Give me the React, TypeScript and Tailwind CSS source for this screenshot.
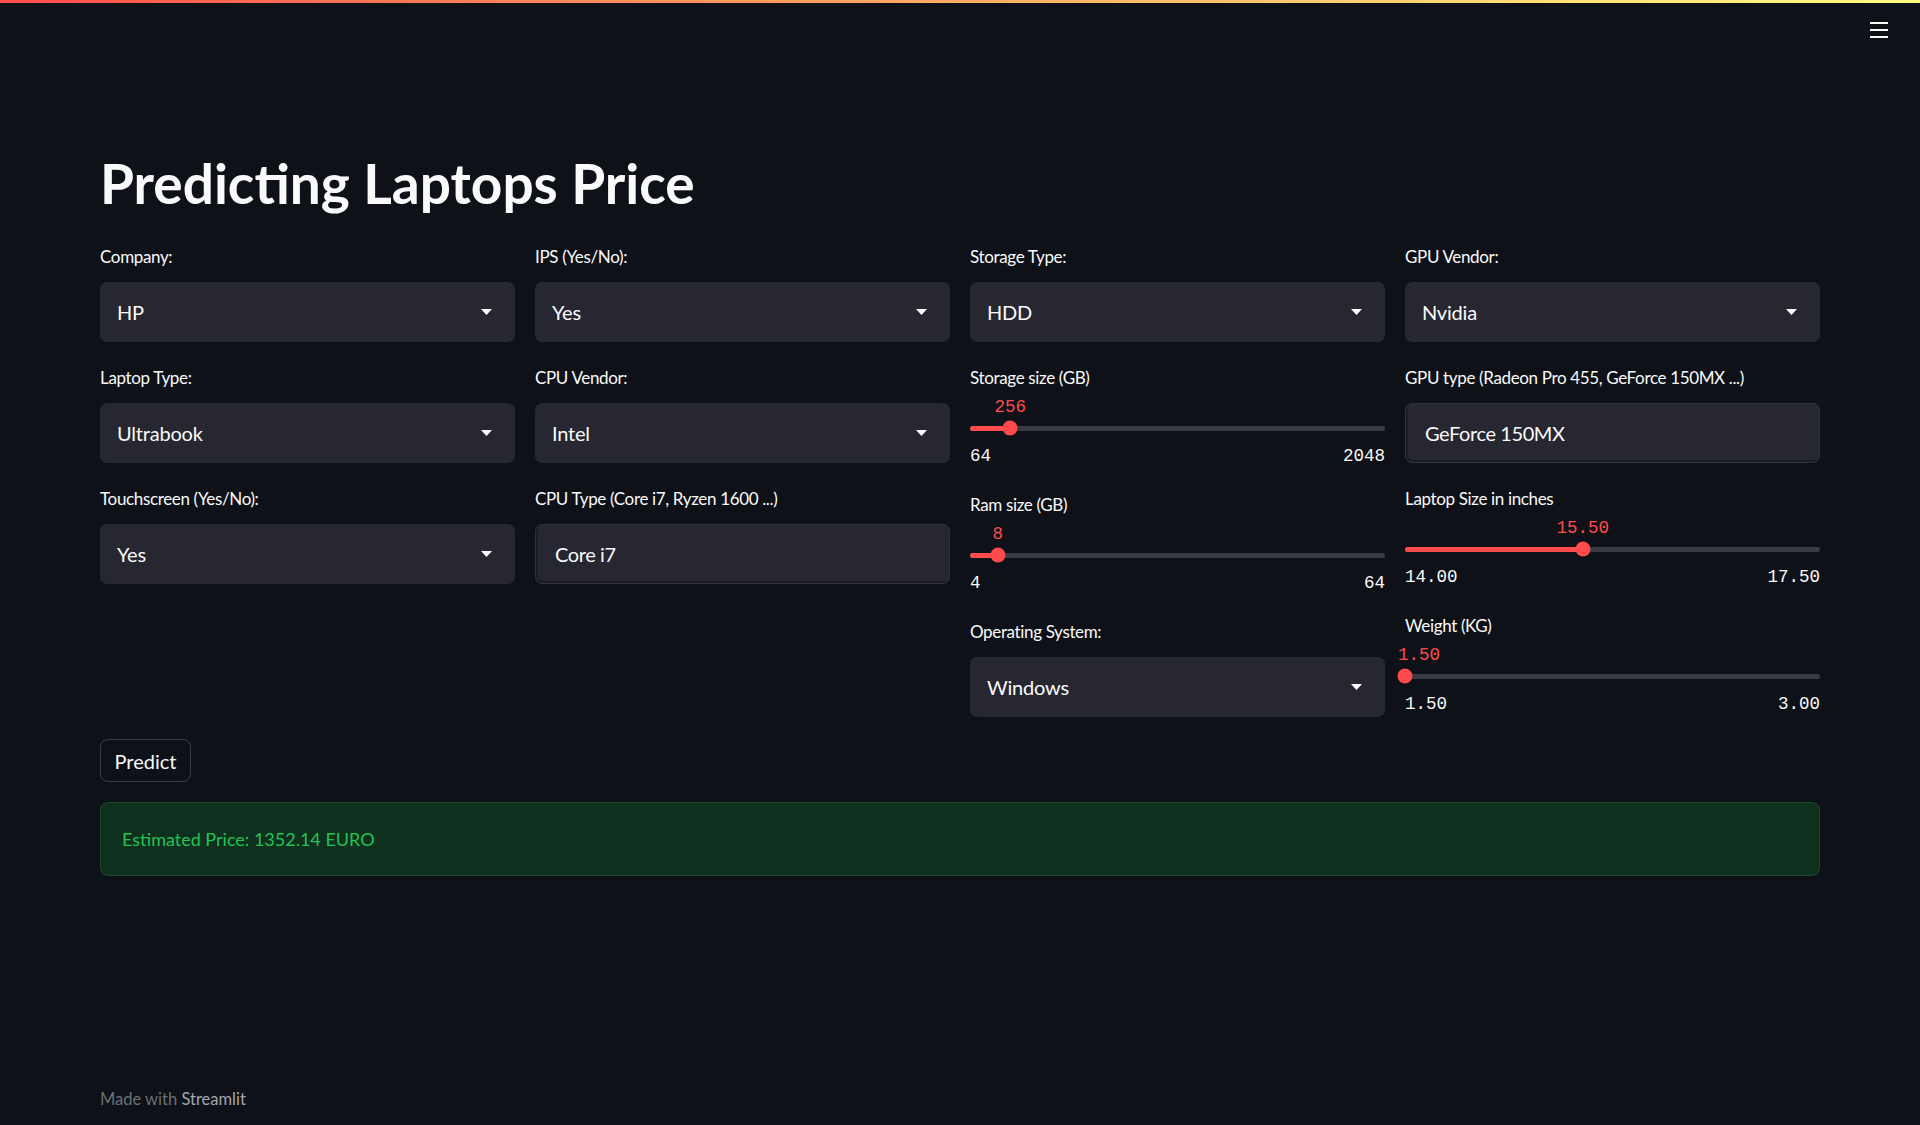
import React from 'react'

const labelCls = "h-[35px] text-[17px] leading-[30px] tracking-[-0.35px] text-[#fafafa]"

function Caret() {
  return (
    <svg width="11" height="6" viewBox="0 0 11 6" className="shrink-0">
      <path d="M0 0 L11 0 L5.5 6 Z" fill="#fafafa" />
    </svg>
  )
}

function SelectBox({ label, value }: { label: string; value: string }) {
  return (
    <div className="flex flex-col">
      <div className={labelCls}>{label}</div>
      <div className="mt-[5px] flex h-[60px] items-center justify-between rounded-[7px] bg-[#262730] pl-[17px] pr-[23px]">
        <span className="text-[20px] tracking-[-0.2px] text-[#fafafa]">{value}</span>
        <Caret />
      </div>
    </div>
  )
}

function TextBox({ label, value }: { label: string; value: string }) {
  return (
    <div className="flex flex-col">
      <div className={labelCls}>{label}</div>
      <div className="mt-[5px] flex h-[60px] items-center rounded-[7px] border border-[#30313a] bg-[#262730] pl-[19px] shadow-[inset_2px_-2px_0_#1c1d24]">
        <span className="text-[20px] tracking-[-0.4px] text-[#fafafa]">{value}</span>
      </div>
    </div>
  )
}

function Slider({ label, min, max, value, digits }: { label: string; min: number; max: number; value: number; digits: number }) {
  const pct = ((value - min) / (max - min)) * 100
  const atMin = value === min
  return (
    <div className="flex flex-col">
      <div className={labelCls}>{label}</div>
      <div className="relative h-[18px]">
        <span
          className={
            atMin
              ? "absolute top-0 -translate-x-[7px] font-['Liberation_Mono',monospace] text-[17.5px] leading-[18px] text-[#ff4b4b]"
              : "absolute top-0 -translate-x-1/2 font-['Liberation_Mono',monospace] text-[17.5px] leading-[18px] text-[#ff4b4b]"
          }
          style={{ left: `${pct}%` }}
        >
          {value.toFixed(digits)}
        </span>
      </div>
      <div className="flex h-[24px] items-center">
        <div className="relative h-[5px] w-full rounded-full bg-[#3a3b44]">
          <div className="absolute left-0 top-0 h-full rounded-full bg-[#ff4b4b]" style={{ width: `${pct}%` }} />
          <div
            className="absolute top-1/2 h-[15px] w-[15px] -translate-x-1/2 -translate-y-1/2 rounded-full bg-[#ff4b4b]"
            style={{ left: `${pct}%` }}
          />
        </div>
      </div>
      <div className="mt-[4px] flex h-[25px] justify-between font-['Liberation_Mono',monospace] text-[17.5px] leading-[24px] text-[#fafafa]">
        <span>{min.toFixed(digits)}</span>
        <span>{max.toFixed(digits)}</span>
      </div>
    </div>
  )
}

export default function App() {
  return (
    <div className="flex min-h-screen flex-col bg-[#0e1117] font-['Lato','Noto_Sans',sans-serif] text-[#fafafa]">
      <div className="h-[3px] w-full bg-gradient-to-r from-[#ff4b4b] to-[#fffd80]" />
      <div className="flex h-[57px] justify-end pr-[32px] pt-[19px]">
        <div className="flex w-[18px] flex-col gap-[5px]">
          <div className="h-[2px] bg-[#fafafa]" />
          <div className="h-[2px] bg-[#fafafa]" />
          <div className="h-[2px] bg-[#fafafa]" />
        </div>
      </div>

      <main className="flex-1 px-[100px] pt-[90px]">
        <h1 className="mb-[26px] text-[55px] font-bold leading-[66px]">Predicting Laptops Price</h1>

        <div className="grid grid-cols-4 gap-x-[20px]">
          <div className="flex flex-col gap-[21px]">
            <SelectBox label="Company:" value="HP" />
            <SelectBox label="Laptop Type:" value="Ultrabook" />
            <SelectBox label="Touchscreen (Yes/No):" value="Yes" />
          </div>
          <div className="flex flex-col gap-[21px]">
            <SelectBox label="IPS (Yes/No):" value="Yes" />
            <SelectBox label="CPU Vendor:" value="Intel" />
            <TextBox label="CPU Type (Core i7, Ryzen 1600 ...)" value="Core i7" />
          </div>
          <div className="flex flex-col gap-[21px]">
            <SelectBox label="Storage Type:" value="HDD" />
            <Slider label="Storage size (GB)" min={64} max={2048} value={256} digits={0} />
            <Slider label="Ram size (GB)" min={4} max={64} value={8} digits={0} />
            <SelectBox label="Operating System:" value="Windows" />
          </div>
          <div className="flex flex-col gap-[21px]">
            <SelectBox label="GPU Vendor:" value="Nvidia" />
            <TextBox label="GPU type (Radeon Pro 455, GeForce 150MX ...)" value="GeForce 150MX" />
            <Slider label="Laptop Size in inches" min={14} max={17.5} value={15.5} digits={2} />
            <Slider label="Weight (KG)" min={1.5} max={3} value={1.5} digits={2} />
          </div>
        </div>

        <button className="mt-[22px] h-[43px] w-[91px] rounded-[8px] border border-[#3b3d45] text-[20px] text-[#fafafa]">
          Predict
        </button>

        <div className="mt-[20px] flex h-[74px] items-center rounded-[8px] border border-[#1a4a2b] bg-[#0f2f1f] px-[21px]">
          <span className="text-[18px] text-[#21c354]">Estimated Price: 1352.14 EURO</span>
        </div>
      </main>

      <footer className="px-[100px] pb-[14px] text-[16.5px] leading-[24px]">
        <span className="text-[#6d6f76]">Made with </span>
        <span className="text-[#a3a6ae]">Streamlit</span>
      </footer>
    </div>
  )
}
